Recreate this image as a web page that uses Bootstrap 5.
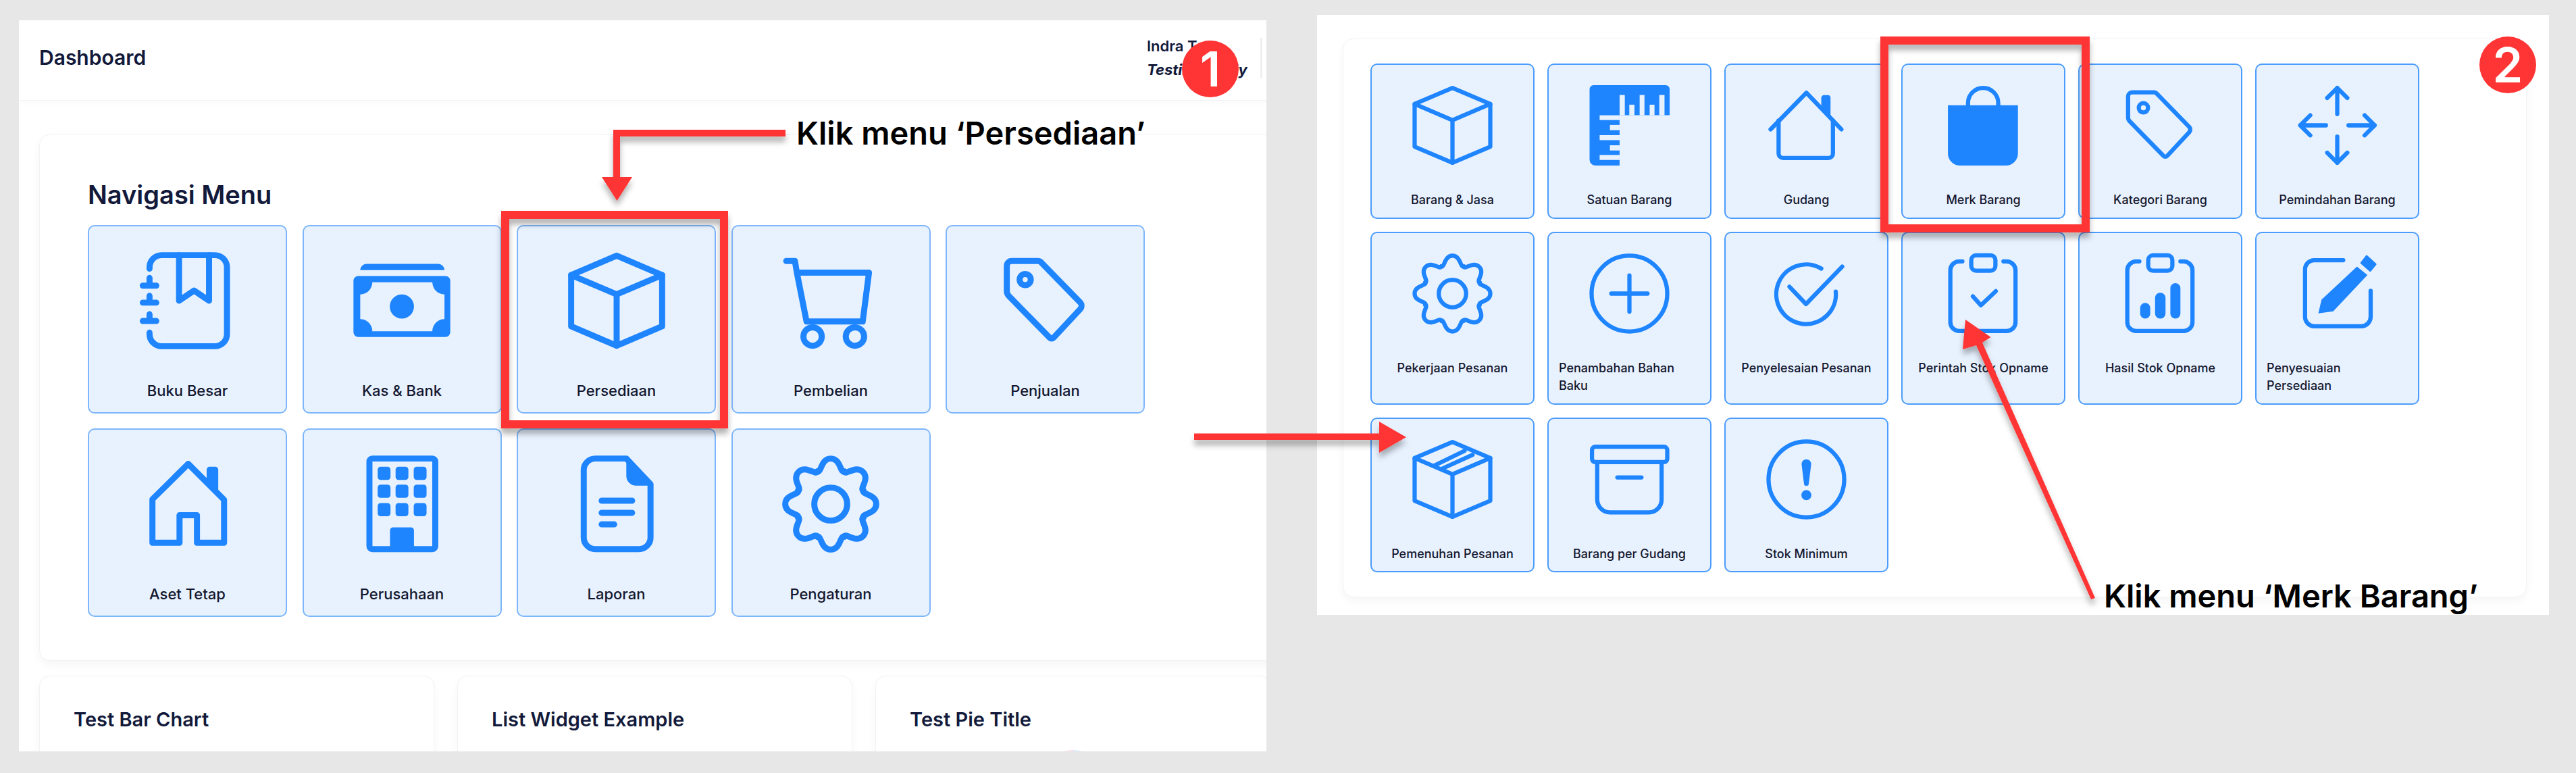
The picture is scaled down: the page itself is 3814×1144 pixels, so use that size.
<!DOCTYPE html>
<html>
<head>
    <title>Navigasi Menu</title>
    <link rel="stylesheet" href="https://cdn.jsdelivr.net/npm/bootstrap@5.3.0/dist/css/bootstrap.min.css">
    <style>
        body {
            font-family: "Inter", "Liberation Sans", sans-serif;
            background-color: #e7e7e7;
            color: #12193a;
            width: 3814px;
            height: 1144px;
            overflow: hidden;
        }
        .page-root { width: 3814px; height: 1144px; padding: 22px 0 0 28px; gap: 75px; }
        .shot-left { width: 1847px; height: 1082px; margin-top: 8px; overflow: hidden; }
        .shot-right { width: 1824px; height: 888px; padding: 35px 33px 0 38px; }
        .top-head { height: 119px; padding: 0 6px 7px 30px; border-bottom: 1px solid #f2f3f5; box-shadow: 0 4px 10px rgba(0, 0, 0, .02); }
        .head-title { font-size: 30px; font-weight: 600; }
        .head-user { width: 171px; height: 60px; border-right: 3px solid #eeeff1; font-size: 22px; line-height: 35px; font-weight: 600; white-space: nowrap; }
        .panel-card { border: 1px solid #f2f3f5; border-radius: 16px; box-shadow: 0 6px 14px rgba(0, 0, 0, .04); background: #fff; }
        .nav-big { width: 1900px; margin: 50px 0 0 30px; padding: 66px 0 64px 71px; }
        .nav-big h2 { font-size: 38px; line-height: 44px; font-weight: 600; margin-bottom: 23px; color: #12193a; }
        .nav-small { padding: 36px 40px 36px 40px; height: 827px; }
        .tile-grid-big { grid-template-columns: repeat(5, 295px); gap: 22px 22.5px; }
        .tile-grid-small { grid-template-columns: repeat(6, 243px); gap: 19px 19px; }
        .menu-tile { background-color: #e8f2ff; border-radius: 10px; color: #1e85ff; }
        .tile-grid-big .menu-tile { border: 2px solid #7db6fb; padding: 24px 13px 16px; }
        .tile-grid-small .menu-tile { border: 2px solid #4b9cfc; padding: 18px 15px 12px; }
        .tile-icon { display: block; flex: none; fill: none; stroke: currentColor; stroke-linecap: round; stroke-linejoin: round; }
        .tile-grid-big .tile-icon { width: 172px; height: 172px; stroke-width: 1.25; }
        .tile-grid-small .tile-icon { width: 143px; height: 143px; stroke-width: 1.05; }
        .tile-name { color: #14172e; font-weight: 500; }
        .tile-grid-big .tile-name { font-size: 22px; line-height: 32px; margin-top: 31px; }
        .tile-grid-small .tile-name { font-size: 18px; line-height: 26.5px; margin-top: 26px; }
        .mini-row { margin: 22px 0 0 30px; width: 1900px; gap: 34px; }
        .mini-card { width: 585px; height: 200px; padding: 46px 0 0 50px; }
        .mini-card h5 { font-size: 29px; line-height: 36px; font-weight: 600; margin: 0; color: #12193a; }
        .pie-chart { display: block; margin: 27px 0 0 185px; }
        .overlay-art { position: absolute; left: 0; top: 0; width: 3814px; height: 1144px; pointer-events: none; }
        .call-label { position: absolute; font-size: 47px; line-height: 56px; font-weight: 600; color: #000; white-space: nowrap; }
        .label-one { left: 1179px; top: 169px; }
        .label-two { left: 3115px; top: 854px; }
        .step-badge { position: absolute; width: 84px; height: 84px; border-radius: 50%; background-color: #ff3434; color: #fff; font-size: 72px; line-height: 84px; font-weight: 600; text-align: center; }
        .badge-one { left: 1750px; top: 60px; }
        .badge-two { left: 3671px; top: 54px; }
    </style>
</head>
<body>
    <svg width="0" height="0" class="position-absolute">
        <defs>
            <symbol id="ic-notebook" viewBox="0 0 24 24">
                <path d="M4.1 5.4V5.1a2.5 2.5 0 0 1 2.5-2.5h11a2.5 2.5 0 0 1 2.5 2.5v13.8a2.5 2.5 0 0 1-2.5 2.5h-11a2.5 2.5 0 0 1-2.5-2.5v-.3"/>
                <path d="M10.2 2.6V12l3.1-2.1 3.1 2.1V2.6"/>
                <path d="M4.1 7.3v1.6M2.7 8.9h2.8M4.1 11v1.4M2.7 12.4h2.8M4.1 14.8v1.4M2.7 16.2h2.8"/>
            </symbol>
            <symbol id="ic-money" viewBox="0 0 24 24">
                <path fill="currentColor" stroke="none" fill-rule="evenodd" d="M3 6.9h18a1 1 0 0 1 1 1v10.6a1 1 0 0 1-1 1H3a1 1 0 0 1-1-1V7.9a1 1 0 0 1 1-1zM5.9 8.2a2.5 2.5 0 0 1-2.5 2.5v5.1a2.5 2.5 0 0 1 2.5 2.5h12.4a2.5 2.5 0 0 1 2.5-2.5v-5.1a2.5 2.5 0 0 1-2.5-2.5z"/>
                <circle cx="12" cy="13.2" r="2.5" fill="currentColor" stroke="none"/>
                <path fill="currentColor" stroke="none" d="M3.4 5.7c0-.7.6-1.3 1.3-1.3h14.8c.7 0 1.3.6 1.3 1.3z"/>
            </symbol>
            <symbol id="ic-box" viewBox="0 0 24 24">
                <path d="M12 2.7 21.4 6.7v10.6L12 21.3 2.6 17.3V6.7z"/>
                <path d="M2.6 6.7 12 10.7l9.4-4M12 10.7v10.6"/>
            </symbol>
            <symbol id="ic-box-tape" viewBox="0 0 24 24">
                <path d="M12 2.7 21.4 6.7v10.6L12 21.3 2.6 17.3V6.7z"/>
                <path d="M2.6 6.7 12 10.7l9.4-4M12 10.7v10.6"/>
                <path d="M7.4 8.6 15 4.9M9.3 9.4 17 5.9"/>
            </symbol>
            <symbol id="ic-cart" viewBox="0 0 24 24">
                <path d="M2.8 3.8h1.8L5 6.2 7 16.3h11.6l1.3-10.1H5"/>
                <circle cx="8.25" cy="19.4" r="1.9"/>
                <circle cx="17" cy="19.4" r="1.9"/>
            </symbol>
            <symbol id="ic-tag" viewBox="0 0 24 24">
                <path d="M4 4.8A1 1 0 0 1 5 3.8h5.4a1 1 0 0 1 .8.4l8 8.2a1 1 0 0 1 0 1.3l-5.5 5.9a.6.6 0 0 1-.9 0L4.4 11a1.4 1.4 0 0 1-.4-1z"/>
                <circle cx="7.8" cy="7.65" r="1.15"/>
            </symbol>
            <symbol id="ic-house" viewBox="0 0 24 24">
                <path d="M12.1 3.7 19.5 11.1V20h-5.6v-5.7h-3.6V20H4.7v-9z"/>
                <path fill="currentColor" stroke="none" d="M15.9 8V4.9c0-.3.3-.6.6-.6h1.2c.3 0 .6.3.6.6v5.4z"/>
            </symbol>
            <symbol id="ic-building" viewBox="0 0 24 24">
                <rect x="5.3" y="2.6" width="13.6" height="18.7" rx=".6"/>
                <g fill="currentColor" stroke="none">
                    <rect x="7" y="4.3" width="2.65" height="2.7" rx=".6"/>
                    <rect x="10.7" y="4.3" width="2.65" height="2.7" rx=".6"/>
                    <rect x="14.45" y="4.3" width="2.65" height="2.7" rx=".6"/>
                    <rect x="7" y="8" width="2.65" height="2.7" rx=".6"/>
                    <rect x="10.7" y="8" width="2.65" height="2.7" rx=".6"/>
                    <rect x="14.45" y="8" width="2.65" height="2.7" rx=".6"/>
                    <rect x="7" y="11.8" width="2.65" height="2.7" rx=".6"/>
                    <rect x="10.7" y="11.8" width="2.65" height="2.7" rx=".6"/>
                    <rect x="14.45" y="11.8" width="2.65" height="2.7" rx=".6"/>
                    <path d="M9.55 21.4v-4a.6.6 0 0 1 .6-.6h3.75a.6.6 0 0 1 .6.6v4z"/>
                </g>
            </symbol>
            <symbol id="ic-doc" viewBox="0 0 24 24">
                <path d="M14 2.6H7.6A2.4 2.4 0 0 0 5.2 5v13.9a2.4 2.4 0 0 0 2.4 2.4h9a2.4 2.4 0 0 0 2.4-2.4V7.9z"/>
                <path fill="currentColor" stroke="none" d="M14 2.6 19.3 8.2H16a2 2 0 0 1-2-2z"/>
                <path d="M8.9 11.3h6.3M8.9 13.8h6.3M8.9 16.2h2.6"/>
            </symbol>
            <symbol id="ic-gear" viewBox="0 0 24 24">
                <circle cx="12" cy="12" r="3.4"/>
                <path d="M9.21 5.26C10.1 5.63 9.9 2.6 12 2.6s1.9 3.03 2.79 2.66"/>
                <path transform="rotate(45 12 12)" d="M9.21 5.26C10.1 5.63 9.9 2.6 12 2.6s1.9 3.03 2.79 2.66"/>
                <path transform="rotate(90 12 12)" d="M9.21 5.26C10.1 5.63 9.9 2.6 12 2.6s1.9 3.03 2.79 2.66"/>
                <path transform="rotate(135 12 12)" d="M9.21 5.26C10.1 5.63 9.9 2.6 12 2.6s1.9 3.03 2.79 2.66"/>
                <path transform="rotate(180 12 12)" d="M9.21 5.26C10.1 5.63 9.9 2.6 12 2.6s1.9 3.03 2.79 2.66"/>
                <path transform="rotate(225 12 12)" d="M9.21 5.26C10.1 5.63 9.9 2.6 12 2.6s1.9 3.03 2.79 2.66"/>
                <path transform="rotate(270 12 12)" d="M9.21 5.26C10.1 5.63 9.9 2.6 12 2.6s1.9 3.03 2.79 2.66"/>
                <path transform="rotate(315 12 12)" d="M9.21 5.26C10.1 5.63 9.9 2.6 12 2.6s1.9 3.03 2.79 2.66"/>
            </symbol>
            <symbol id="ic-ruler" viewBox="0 0 24 24">
                <path fill="currentColor" stroke="none" d="M3.1 2H21a1 1 0 0 1 1 1v6.5H9.56V22H3.6a1.5 1.5 0 0 1-1.5-1.5V3a1 1 0 0 1 1-1z"/>
                <g fill="#e8f2ff" stroke="none">
                    <rect x="9.56" y="4.46" width="1.29" height="5.04"/>
                    <rect x="11.97" y="6.87" width="1.28" height="2.63"/>
                    <rect x="14.54" y="4.46" width="1.2" height="5.04"/>
                    <rect x="17.03" y="6.87" width="1.2" height="2.63"/>
                    <rect x="19.43" y="4.46" width="1.29" height="5.04"/>
                    <rect x="4.6" y="9.5" width="4.96" height="1.18"/>
                    <rect x="7.16" y="11.9" width="2.4" height="1.3"/>
                    <rect x="4.6" y="14.43" width="4.96" height="1.24"/>
                    <rect x="7.16" y="16.95" width="2.4" height="1.29"/>
                    <rect x="4.6" y="19.36" width="4.96" height="1.24"/>
                </g>
            </symbol>
            <symbol id="ic-home" viewBox="0 0 24 24">
                <path d="M3.1 13 12 3.9l8.7 9.1"/>
                <path d="M5.1 10.8V19a1.1 1.1 0 0 0 1.1 1.1h11.3a1.1 1.1 0 0 0 1.1-1.1v-8.2"/>
                <path fill="currentColor" stroke="none" d="M15.7 7.6V5.2c0-.4.3-.7.7-.7h1c.4 0 .6.3.6.7v4.6z"/>
            </symbol>
            <symbol id="ic-bag" viewBox="0 0 24 24">
                <path fill="currentColor" stroke="none" d="M3.2 7h17.4v12a3 3 0 0 1-3 3H6.2a3 3 0 0 1-3-3z"/>
                <path d="M8.2 7v-.55a3.75 3.75 0 0 1 7.5 0V7"/>
            </symbol>
            <symbol id="ic-move" viewBox="0 0 24 24">
                <path d="M12 2.7v6.5M9.5 5.2 12 2.7l2.5 2.5M12 14.8v6.5M9.5 18.8l2.5 2.5 2.5-2.5M2.8 12h6.4M5.3 9.5 2.8 12l2.5 2.5M14.8 12h6.5M18.8 9.5l2.5 2.5-2.5 2.5"/>
            </symbol>
            <symbol id="ic-plus" viewBox="0 0 24 24">
                <circle cx="12" cy="12" r="9.4"/>
                <path d="M12 7.5v9M7.5 12h9"/>
            </symbol>
            <symbol id="ic-check" viewBox="0 0 24 24">
                <path d="M15.7 5.8A7.4 7.4 0 1 0 19.3 11.5"/>
                <path d="M7.8 10.3 11.9 14.6 20.9 5.3"/>
            </symbol>
            <symbol id="ic-clip-check" viewBox="0 0 24 24">
                <path d="M6.8 4H6a2.2 2.2 0 0 0-2.2 2.2v12.9A2.2 2.2 0 0 0 6 21.3h11.8a2.2 2.2 0 0 0 2.2-2.2V6.2A2.2 2.2 0 0 0 17.8 4H17"/>
                <rect x="9" y="2.5" width="6" height="3.8" rx="1.2"/>
                <path d="M9.4 12.7l2 2.2 3.7-3.5"/>
            </symbol>
            <symbol id="ic-clip-chart" viewBox="0 0 24 24">
                <path d="M6.8 4H6a2.2 2.2 0 0 0-2.2 2.2v12.9A2.2 2.2 0 0 0 6 21.3h11.8a2.2 2.2 0 0 0 2.2-2.2V6.2A2.2 2.2 0 0 0 17.8 4H17"/>
                <rect x="9" y="2.5" width="6" height="3.8" rx="1.2"/>
                <g fill="currentColor" stroke="none">
                    <rect x="7" y="14.3" width="2.5" height="3.9" rx="1.25"/>
                    <rect x="10.7" y="11.8" width="2.6" height="6.4" rx="1.25"/>
                    <rect x="14.5" y="9.4" width="2.5" height="8.8" rx="1.25"/>
                </g>
            </symbol>
            <symbol id="ic-edit" viewBox="0 0 24 24">
                <path d="M13.5 3.7H6.3A2.3 2.3 0 0 0 4 6v11.8a2.3 2.3 0 0 0 2.3 2.3H18a2.3 2.3 0 0 0 2.3-2.3v-6.5"/>
                <path fill="currentColor" stroke="none" d="M7.3 16.9 8.1 13.5 16.9 5.3 19.5 7.4 11 16.4z"/>
                <path fill="currentColor" stroke="currentColor" stroke-width=".5" d="M19.3 2.7 21.5 4.7 20.2 6.3 18 4.4z"/>
            </symbol>
            <symbol id="ic-archive" viewBox="0 0 24 24">
                <rect x="2.7" y="3.9" width="18.7" height="3.8" rx=".8"/>
                <path d="M4 7.7V17a3.2 3.2 0 0 0 3.2 3.2h9.6A3.2 3.2 0 0 0 20 17V7.7"/>
                <path d="M9 11.5h6"/>
            </symbol>
            <symbol id="ic-alert" viewBox="0 0 24 24">
                <circle cx="12" cy="12" r="9.4"/>
                <path fill="currentColor" stroke="none" d="M10.8 8.2a1.2 1.2 0 0 1 2.4 0L12.6 13a.6.6 0 0 1-1.2 0z"/>
                <circle cx="12" cy="15.9" r="1.25" fill="currentColor" stroke="none"/>
            </symbol>
            <filter id="soft-shadow" x="-20%" y="-20%" width="140%" height="140%">
                <feDropShadow dx="0" dy="8" stdDeviation="4" flood-color="#000" flood-opacity=".3"/>
            </filter>
        </defs>
    </svg>

    <div class="page-root d-flex align-items-start">
        <div class="shot-left bg-white flex-shrink-0">
            <div class="top-head d-flex align-items-center justify-content-between">
                <div class="head-title">Dashboard</div>
                <div class="head-user d-flex flex-column justify-content-center">
                    <div>Indra Tan</div>
                    <div class="fst-italic fw-bold">Testing Study</div>
                </div>
            </div>
            <div class="nav-big panel-card">
                <h2>Navigasi Menu</h2>
                <div class="tile-grid-big d-grid">
                    <a class="menu-tile d-flex flex-column align-items-center text-decoration-none"><svg class="tile-icon"><use href="#ic-notebook"/></svg><span class="tile-name">Buku Besar</span></a>
                    <a class="menu-tile d-flex flex-column align-items-center text-decoration-none"><svg class="tile-icon"><use href="#ic-money"/></svg><span class="tile-name">Kas &amp; Bank</span></a>
                    <a class="menu-tile d-flex flex-column align-items-center text-decoration-none"><svg class="tile-icon"><use href="#ic-box"/></svg><span class="tile-name">Persediaan</span></a>
                    <a class="menu-tile d-flex flex-column align-items-center text-decoration-none"><svg class="tile-icon"><use href="#ic-cart"/></svg><span class="tile-name">Pembelian</span></a>
                    <a class="menu-tile d-flex flex-column align-items-center text-decoration-none"><svg class="tile-icon"><use href="#ic-tag"/></svg><span class="tile-name">Penjualan</span></a>
                    <a class="menu-tile d-flex flex-column align-items-center text-decoration-none"><svg class="tile-icon"><use href="#ic-house"/></svg><span class="tile-name">Aset Tetap</span></a>
                    <a class="menu-tile d-flex flex-column align-items-center text-decoration-none"><svg class="tile-icon"><use href="#ic-building"/></svg><span class="tile-name">Perusahaan</span></a>
                    <a class="menu-tile d-flex flex-column align-items-center text-decoration-none"><svg class="tile-icon"><use href="#ic-doc"/></svg><span class="tile-name">Laporan</span></a>
                    <a class="menu-tile d-flex flex-column align-items-center text-decoration-none"><svg class="tile-icon"><use href="#ic-gear"/></svg><span class="tile-name">Pengaturan</span></a>
                </div>
            </div>
            <div class="mini-row d-flex">
                <div class="mini-card panel-card"><h5>Test Bar Chart</h5></div>
                <div class="mini-card panel-card"><h5>List Widget Example</h5></div>
                <div class="mini-card panel-card">
                    <h5>Test Pie Title</h5>
                    <svg class="pie-chart" width="114" height="114" viewBox="0 0 114 114">
                        <path d="M57 57V0a57 57 0 0 0-28 8z" fill="#fbe0e6"/>
                        <path d="M57 57V0a57 57 0 0 1 28 8z" fill="#dcecfc"/>
                    </svg>
                </div>
            </div>
        </div>

        <div class="shot-right bg-white flex-shrink-0">
            <div class="nav-small panel-card">
                <div class="tile-grid-small d-grid">
                    <a class="menu-tile d-flex flex-column align-items-center text-decoration-none"><svg class="tile-icon"><use href="#ic-box"/></svg><span class="tile-name">Barang &amp; Jasa</span></a>
                    <a class="menu-tile d-flex flex-column align-items-center text-decoration-none"><svg class="tile-icon"><use href="#ic-ruler"/></svg><span class="tile-name">Satuan Barang</span></a>
                    <a class="menu-tile d-flex flex-column align-items-center text-decoration-none"><svg class="tile-icon"><use href="#ic-home"/></svg><span class="tile-name">Gudang</span></a>
                    <a class="menu-tile d-flex flex-column align-items-center text-decoration-none"><svg class="tile-icon"><use href="#ic-bag"/></svg><span class="tile-name">Merk Barang</span></a>
                    <a class="menu-tile d-flex flex-column align-items-center text-decoration-none"><svg class="tile-icon"><use href="#ic-tag"/></svg><span class="tile-name">Kategori Barang</span></a>
                    <a class="menu-tile d-flex flex-column align-items-center text-decoration-none"><svg class="tile-icon"><use href="#ic-move"/></svg><span class="tile-name">Pemindahan Barang</span></a>
                    <a class="menu-tile d-flex flex-column align-items-center text-decoration-none"><svg class="tile-icon"><use href="#ic-gear"/></svg><span class="tile-name">Pekerjaan Pesanan</span></a>
                    <a class="menu-tile d-flex flex-column align-items-center text-decoration-none"><svg class="tile-icon"><use href="#ic-plus"/></svg><span class="tile-name">Penambahan Bahan Baku</span></a>
                    <a class="menu-tile d-flex flex-column align-items-center text-decoration-none"><svg class="tile-icon"><use href="#ic-check"/></svg><span class="tile-name">Penyelesaian Pesanan</span></a>
                    <a class="menu-tile d-flex flex-column align-items-center text-decoration-none"><svg class="tile-icon"><use href="#ic-clip-check"/></svg><span class="tile-name">Perintah Stok Opname</span></a>
                    <a class="menu-tile d-flex flex-column align-items-center text-decoration-none"><svg class="tile-icon"><use href="#ic-clip-chart"/></svg><span class="tile-name">Hasil Stok Opname</span></a>
                    <a class="menu-tile d-flex flex-column align-items-center text-decoration-none"><svg class="tile-icon"><use href="#ic-edit"/></svg><span class="tile-name">Penyesuaian Persediaan</span></a>
                    <a class="menu-tile d-flex flex-column align-items-center text-decoration-none"><svg class="tile-icon"><use href="#ic-box-tape"/></svg><span class="tile-name">Pemenuhan Pesanan</span></a>
                    <a class="menu-tile d-flex flex-column align-items-center text-decoration-none"><svg class="tile-icon"><use href="#ic-archive"/></svg><span class="tile-name">Barang per Gudang</span></a>
                    <a class="menu-tile d-flex flex-column align-items-center text-decoration-none"><svg class="tile-icon"><use href="#ic-alert"/></svg><span class="tile-name">Stok Minimum</span></a>
                </div>
            </div>
        </div>
    </div>

    <!-- annotations drawn over both screenshots -->
    <svg class="overlay-art" viewBox="0 0 3814 1144">
        <g filter="url(#soft-shadow)" fill="#ff3434">
            <path d="M1163 192V202H918V262H936L913.5 297 891 262H908V192z"/>
            <path d="M1768 641.5H2042V624L2082 647 2042 670V651H1768z"/>
            <path d="M3096 887 2926 511 2906 517 2910 473 2947.5 499 2935 507 3102 885z"/>
        </g>
        <g filter="url(#soft-shadow)" fill="none" stroke="#ff3434" stroke-width="12">
            <rect x="748" y="318" width="324" height="310"/>
            <rect x="2790" y="60" width="298" height="278"/>
        </g>
    </svg>
    <div class="call-label label-one">Klik menu ‘Persediaan’</div>
    <div class="call-label label-two">Klik menu ‘Merk Barang’</div>
    <div class="step-badge badge-one">1</div>
    <div class="step-badge badge-two">2</div>

    <script src="https://cdn.jsdelivr.net/npm/bootstrap@5.3.0/dist/js/bootstrap.bundle.min.js"></script>
</body>
</html>
